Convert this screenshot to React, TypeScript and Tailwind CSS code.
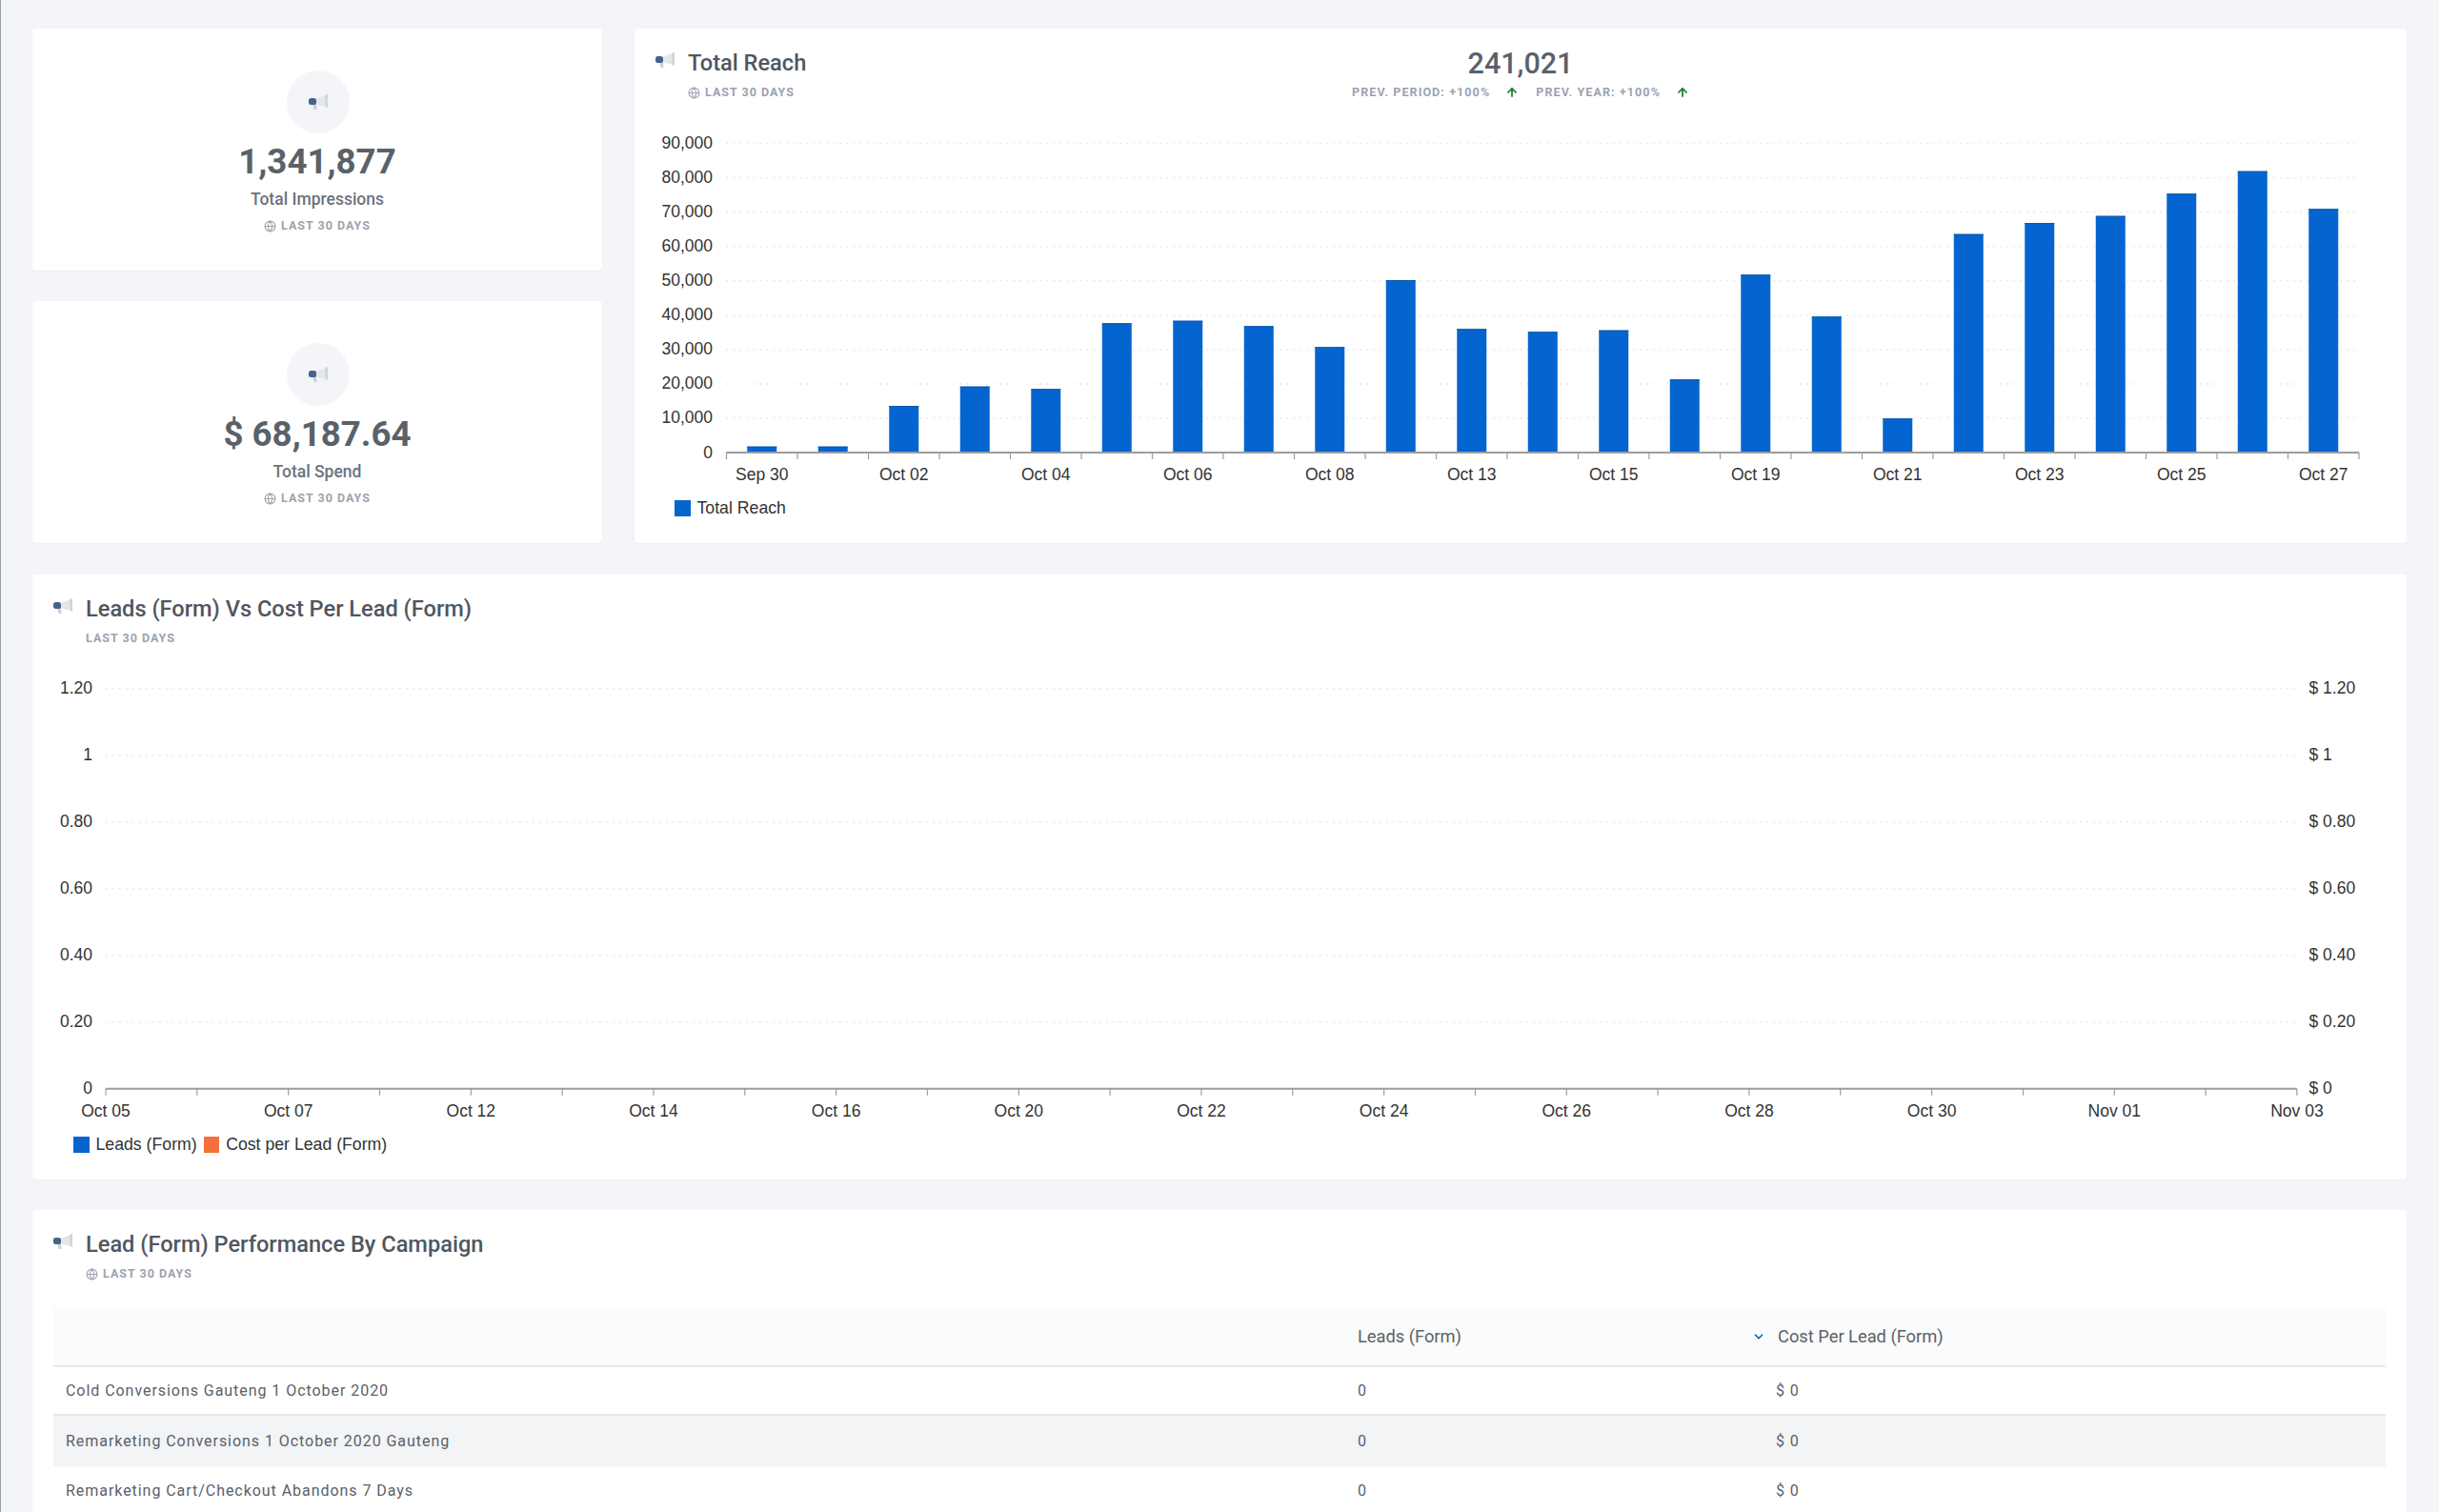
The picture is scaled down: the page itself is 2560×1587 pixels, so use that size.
import { ArrowUp, ChevronDown, Globe } from "lucide-react";

const reachBars = [6.3, 6.3, 49, 69.3, 66.7, 135.7, 138.3, 132.7, 110.7, 181, 129.7, 126.7, 128.3, 76.7, 186.7, 142.7, 35.7, 229.3, 241, 248.3, 271.7, 295.3, 255.7];
const reachLabels = ["Sep 30", "Oct 02", "Oct 04", "Oct 06", "Oct 08", "Oct 13", "Oct 15", "Oct 19", "Oct 21", "Oct 23", "Oct 25", "Oct 27"];
const reachTicks = ["0", "10,000", "20,000", "30,000", "40,000", "50,000", "60,000", "70,000", "80,000", "90,000"];

const leadLabels = ["Oct 05", "Oct 07", "Oct 12", "Oct 14", "Oct 16", "Oct 20", "Oct 22", "Oct 24", "Oct 26", "Oct 28", "Oct 30", "Nov 01", "Nov 03"];
const leadTicks = ["0", "0.20", "0.40", "0.60", "0.80", "1", "1.20"];

const rows = [
  "Cold Conversions Gauteng 1 October 2020",
  "Remarketing Conversions 1 October 2020 Gauteng",
  "Remarketing Cart/Checkout Abandons 7 Days",
];

function Megaphone() {
  return (
    <svg width="20" height="17" viewBox="0 0 20 17" className="shrink-0">
      <path d="M7 5 L17 1.5 L17.5 13 L7 10 Z" fill="#e4e7ea" />
      <path d="M17 1 L20 0 V14 L17.5 13 Z" fill="#cfd4da" />
      <path d="M4 10 L8 10 L8.5 16 L5.5 16 Z" fill="#cdd0da" />
      <rect x="0" y="4" width="8" height="7" rx="2.5" fill="#45628f" />
    </svg>
  );
}

function Period({ globe = true, className = "" }: { globe?: boolean; className?: string }) {
  return (
    <div className={`flex items-center gap-[5px] h-4 text-[12.5px] font-bold tracking-[1px] text-[#9ca3af] ${className}`}>
      {globe && <Globe size={13} strokeWidth={2} className="shrink-0" />}
      LAST 30 DAYS
    </div>
  );
}

function CardHeader({ title, globe = true }: { title: string; globe?: boolean }) {
  return (
    <div className="flex gap-[14px] pl-[22px] pt-[22px]">
      <div className="mt-[3px]">
        <Megaphone />
      </div>
      <div className="flex flex-col">
        <h2 className="text-[23.6px] leading-7 font-medium text-[#50565f]">{title}</h2>
        <Period globe={globe} className="mt-[9px]" />
      </div>
    </div>
  );
}

function StatCard({ value, label }: { value: string; label: string }) {
  return (
    <div className="h-[254px] bg-white rounded shadow-[0_1px_2px_rgba(90,97,105,0.05)] flex flex-col items-center pt-[44px]">
      <div className="ml-[1px] w-[66px] h-[66px] rounded-full bg-[#f3f5f8] flex items-center justify-center">
        <Megaphone />
      </div>
      <div className="mt-2 text-[36.7px] leading-[44px] font-bold text-[#5a6169]">{value}</div>
      <div className="mt-[5px] text-[17.5px] leading-6 font-medium text-[#6b7280]">{label}</div>
      <Period className="mt-2" />
    </div>
  );
}

function ReachChart() {
  const left = 96.5;
  const step = 74.5;
  const base = 345;
  const right = left + step * 23;
  return (
    <svg width="1860" height="390" className="block [font-family:'Liberation_Sans',Arial,sans-serif]">
      {reachTicks.map((t, i) => (
        <g key={t}>
          {i > 0 && <line x1={left} x2={right} y1={base - i * 36.03} y2={base - i * 36.03} stroke="#e2e4e8" strokeWidth="1.5" strokeDasharray="1.5 5.5" />}
          <text x="82" y={base - i * 36.03 + 5.5} textAnchor="end" fontSize="17.5" fill="#333333">{t}</text>
        </g>
      ))}
      {reachBars.map((h, i) => (
        <g key={i}>
          <rect x={left + step * i + step / 2 - 15.5} y={base - h} width="31" height={h} fill="#0565d0" />
          <rect x={left + step * i + step / 2 - 15.5} y={base - h} width="31" height="1" fill="#0b57a8" />
        </g>
      ))}
      <line x1={left} x2={right} y1={base} y2={base} stroke="#9a9da1" strokeWidth="2" />
      {Array.from({ length: 24 }, (_, i) => (
        <line key={i} x1={left + step * i} x2={left + step * i} y1={base} y2={base + 7} stroke="#9a9da1" strokeWidth="1.2" />
      ))}
      {reachLabels.map((t, i) => (
        <text key={t} x={left + step * (i * 2 + 0.5)} y="374" textAnchor="middle" fontSize="17.5" fill="#333333">{t}</text>
      ))}
    </svg>
  );
}

function LeadsChart() {
  const left = 77;
  const step = 95.83;
  const base = 439.7;
  const right = left + step * 24;
  return (
    <svg width="2492" height="480" className="block [font-family:'Liberation_Sans',Arial,sans-serif]">
      {leadTicks.map((t, i) => (
        <g key={t}>
          {i > 0 && <line x1={left} x2={right} y1={base - i * 70} y2={base - i * 70} stroke="#e2e4e8" strokeWidth="1.5" strokeDasharray="1.5 5.5" />}
          <text x="63" y={base - i * 70 + 5.5} textAnchor="end" fontSize="17.5" fill="#333333">{t}</text>
          <text x="2389.5" y={base - i * 70 + 5.5} fontSize="17.5" fill="#333333">{"$ " + t}</text>
        </g>
      ))}
      <line x1={left} x2={right} y1={base} y2={base} stroke="#9a9da1" strokeWidth="2" />
      {Array.from({ length: 25 }, (_, i) => (
        <line key={i} x1={left + step * i} x2={left + step * i} y1={base} y2={base + 7} stroke="#9a9da1" strokeWidth="1.2" />
      ))}
      {leadLabels.map((t, i) => (
        <text key={t} x={left + step * i * 2} y="469" textAnchor="middle" fontSize="17.5" fill="#333333">{t}</text>
      ))}
    </svg>
  );
}

function LegendItem({ color, label }: { color: string; label: string }) {
  return (
    <div className="flex items-center gap-[7px] text-[17.7px] leading-[17px] text-[#333333] [font-family:'Liberation_Sans',Arial,sans-serif]">
      <span className={`w-[16.5px] h-[16.5px] ${color}`} />
      {label}
    </div>
  );
}

export default function App() {
  return (
    <div className="w-full h-[1587px] overflow-hidden bg-[#f3f5f9] border-l border-[#9a9ea6] pl-[33px] pr-[34px] pt-[30px] [font-family:Roboto,sans-serif]">
      <div className="grid grid-cols-[598px_1fr] gap-x-[34px]">
        <div className="flex flex-col gap-[32px]">
          <StatCard value="1,341,877" label="Total Impressions" />
          <StatCard value="$ 68,187.64" label="Total Spend" />
        </div>

        <div className="h-[540px] bg-white rounded shadow-[0_1px_2px_rgba(90,97,105,0.05)]">
          <div className="h-[100px] grid grid-cols-[1fr_auto_1fr]">
            <CardHeader title="Total Reach" />
            <div className="flex flex-col items-center pt-[18px]">
              <div className="text-[30.5px] leading-[38px] font-medium text-[#5a6169]">241,021</div>
              <div className="mt-[3px] flex items-center h-4 text-[12.5px] font-bold tracking-[1.1px] text-[#9ca3af]">
                PREV. PERIOD: +100%
                <ArrowUp size={14} strokeWidth={3} className="ml-4 text-[#1a7f2e]" />
                <span className="ml-[18px]">PREV. YEAR: +100%</span>
                <ArrowUp size={14} strokeWidth={3} className="ml-4 text-[#1a7f2e]" />
              </div>
            </div>
            <div />
          </div>
          <ReachChart />
          <div className="mt-[5px] pl-[42px]">
            <LegendItem color="bg-[#0565d0]" label="Total Reach" />
          </div>
        </div>
      </div>

      <div className="mt-[33px] h-[635px] bg-white rounded shadow-[0_1px_2px_rgba(90,97,105,0.05)]">
        <div className="h-[100px]">
          <CardHeader title="Leads (Form) Vs Cost Per Lead (Form)" globe={false} />
        </div>
        <LeadsChart />
        <div className="mt-[10px] pl-[43px] flex gap-[7px]">
          <LegendItem color="bg-[#0565d0]" label="Leads (Form)" />
          <LegendItem color="bg-[#f5713a]" label="Cost per Lead (Form)" />
        </div>
      </div>

      <div className="mt-[32px] bg-white rounded shadow-[0_1px_2px_rgba(90,97,105,0.05)] h-[400px]">
        <div className="h-[102px]">
          <CardHeader title="Lead (Form) Performance By Campaign" />
        </div>
        <div className="mx-[22px] text-[#5a6169]">
          <div className="grid grid-cols-[1369px_413px_1fr] items-center h-[63px] pt-[1px] bg-[#fafbfb] border-b-2 border-[#e8eaec] text-[18.3px]">
            <div />
            <div>Leads (Form)</div>
            <div className="flex items-center gap-[13px] pl-[1px]">
              <ChevronDown size={14} strokeWidth={3} className="text-[#0b6aa8]" />
              Cost Per Lead (Form)
            </div>
          </div>
          {rows.map((name, i) => (
            <div
              key={name}
              className={
                i === 0
                  ? "grid grid-cols-[1369px_413px_1fr] items-center h-[51px] border-b-2 border-[#e6e8ea] text-[16px] tracking-[0.95px]"
                  : i === 1
                    ? "grid grid-cols-[1369px_413px_1fr] items-center h-[53px] bg-[#f2f4f6] text-[16px] tracking-[0.95px]"
                    : "grid grid-cols-[1369px_413px_1fr] items-center h-[52px] text-[16px] tracking-[0.95px]"
              }
            >
              <div className="pl-[13px]">{name}</div>
              <div>0</div>
              <div className="pl-[26px]">$ 0</div>
            </div>
          ))}
        </div>
      </div>
    </div>
  );
}
